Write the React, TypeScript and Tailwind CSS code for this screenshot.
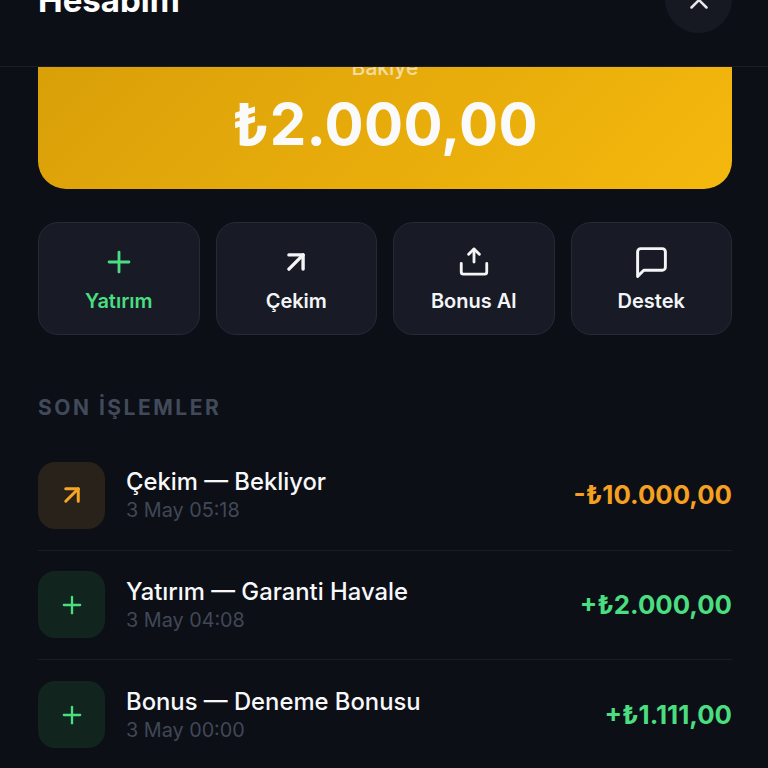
import { ArrowUpRight, Plus, X } from 'lucide-react';
import type { ReactNode } from 'react';

function UploadIcon() {
  return (
    <svg width="34" height="34" viewBox="0 0 24 24" fill="none" stroke="currentColor" strokeWidth="2" strokeLinecap="round" strokeLinejoin="round">
      <path d="M3 13v6a1.5 1.5 0 0 0 1.5 1.5h15A1.5 1.5 0 0 0 21 19v-6" />
      <path d="M12 3v9" />
      <path d="m8.2 6.6 3.8-3.8 3.8 3.8" />
    </svg>
  );
}

function ChatIcon() {
  return (
    <svg width="37" height="37" viewBox="0 0 24 24" fill="none" stroke="currentColor" strokeWidth="1.9" strokeLinecap="round" strokeLinejoin="round" className="-my-[1.5px]">
      <path d="M21 15a2 2 0 0 1-2 2H7l-4 4V5a2 2 0 0 1 2-2h14a2 2 0 0 1 2 2z" />
    </svg>
  );
}

const actions: { label: string; icon: ReactNode; color: string }[] = [
  { label: 'Yatırım', icon: <Plus size={34} strokeWidth={2} />, color: 'text-[#4ade80]' },
  { label: 'Çekim', icon: <ArrowUpRight size={34} strokeWidth={2.4} />, color: 'text-[#f4f5f7]' },
  { label: 'Bonus Al', icon: <UploadIcon />, color: 'text-[#f4f5f7]' },
  { label: 'Destek', icon: <ChatIcon />, color: 'text-[#f4f5f7]' },
];

const transactions = [
  { title: 'Çekim — Bekliyor', date: '3 May 05:18', amount: '-₺10.000,00', pending: true },
  { title: 'Yatırım — Garanti Havale', date: '3 May 04:08', amount: '+₺2.000,00', pending: false },
  { title: 'Bonus — Deneme Bonusu', date: '3 May 00:00', amount: '+₺1.111,00', pending: false },
];

export default function App() {
  return (
    <div className="flex h-[768px] w-[768px] flex-col overflow-hidden bg-[#0c0f16] font-['Inter',sans-serif] text-white">
      <header className="z-10 h-[67px] shrink-0 border-b border-[#1a1e27] bg-[#0c0f16] pr-[36px] pl-[38px]">
        <div className="-mt-[34px] flex items-start justify-between">
          <h1 className="mt-[14px] text-[33px] leading-[40px] font-bold">Hesabım</h1>
          <button className="flex h-[67px] w-[67px] items-center justify-center rounded-full bg-[#161922] text-[#e5e7eb]">
            <X size={30} strokeWidth={2} />
          </button>
        </div>
      </header>

      <main className="flex-1 pr-[36px] pl-[38px]">
        <section className="-mt-[10px] flex h-[132px] flex-col items-center rounded-b-[28px] bg-[linear-gradient(135deg,#d99f08,#f5b80e)]">
          <span className="-mt-[1px] text-[21px] leading-[24px] font-medium text-white/60">Bakiye</span>
          <span className="mt-[10px] text-[58px] leading-[68px] font-bold tracking-[0.3px] text-[#fafafa]">₺2.000,00</span>
        </section>

        <div className="mt-[33px] grid grid-cols-4 gap-[16px]">
          {actions.map((action) => (
            <button
              key={action.label}
              className={`flex h-[113px] flex-col items-center rounded-[20px] border border-[#262a35] bg-[#181b25] pt-[22px] ${action.color}`}
            >
              {action.icon}
              <span className="mt-[9px] text-[20px] leading-[26px] font-semibold">{action.label}</span>
            </button>
          ))}
        </div>

        <h2 className="mt-[60px] text-[21px] leading-[26px] font-bold tracking-[2.5px] text-[#414a5a]">SON İŞLEMLER</h2>

        <ul className="mt-[20px]">
          {transactions.map((tx, index) => (
            <li
              key={tx.title}
              className={`flex h-[109.5px] items-center justify-between ${index < transactions.length - 1 ? 'border-b border-[#191d26]' : ''}`}
            >
              <div className="flex items-center gap-[21px]">
                <div
                  className={`flex h-[67px] w-[67px] items-center justify-center rounded-[17px] ${
                    tx.pending ? 'bg-[#28221a] text-[#f5a623]' : 'bg-[#11241d] text-[#4ade80]'
                  }`}
                >
                  {tx.pending ? <ArrowUpRight size={30} strokeWidth={2.4} /> : <Plus size={28} strokeWidth={2} />}
                </div>
                <div>
                  <p className="text-[23.8px] leading-[30px] font-medium text-[#f7f8fa]">{tx.title}</p>
                  <p className="text-[19.8px] leading-[26px] text-[#414856]">{tx.date}</p>
                </div>
              </div>
              <span className={`text-[25.8px] leading-[32px] font-bold ${tx.pending ? 'text-[#f5a020]' : 'text-[#4ade80]'}`}>
                {tx.amount}
              </span>
            </li>
          ))}
        </ul>
      </main>
    </div>
  );
}
